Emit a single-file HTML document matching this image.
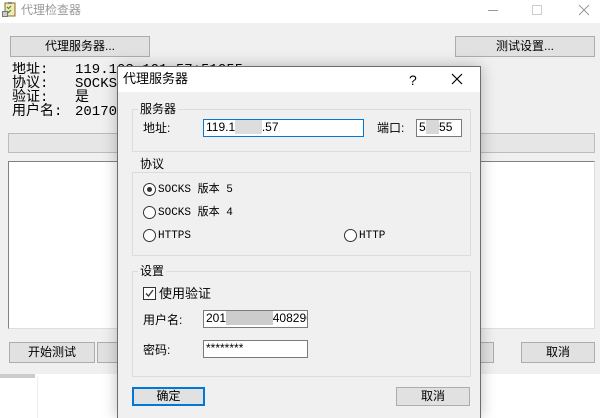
<!DOCTYPE html>
<html><head><meta charset="utf-8"><style>
*{margin:0;padding:0;box-sizing:border-box}
html,body{width:600px;height:418px;overflow:hidden}
body{background:#fff;position:relative;font-family:"Liberation Sans","Noto Sans CJK SC",sans-serif;font-size:12px;color:#000}
.a{position:absolute}
.btn{position:absolute;background:#e1e1e1;border:1px solid #adadad;text-align:center;font-size:12px;line-height:18px}
.t{position:absolute;white-space:nowrap;line-height:14px}
.inp{position:absolute;background:#fff;border:1px solid #7a7a7a;font-size:12px;line-height:15px;padding-left:2px;overflow:hidden;white-space:nowrap}
.grp{position:absolute;border:1px solid #dcdcdc}
.gl{position:absolute;background:#f0f0f0;padding:0 2px;font-size:12px;line-height:14px}
.rad{position:absolute;width:13px;height:13px;border:1px solid #333;border-radius:50%;background:#fff}
.mono{font-family:"Liberation Mono","Noto Sans CJK SC",monospace}
</style></head><body>
<div class="a" style="left:0;top:0;width:600px;height:23px;background:#fff"></div>
<svg class="a" style="left:2px;top:2px" width="14" height="16" viewBox="0 0 14 16"><rect x="3" y="1" width="10" height="13" fill="#f6e7b8" stroke="#8a6d2a"/><rect x="6" y="0" width="4" height="2" fill="#888"/><path d="M5 5l1.5 1.5L9 4M5 9l1.5 1.5L9 8" stroke="#2a9a2a" fill="none" stroke-width="1.2"/><rect x="0" y="9" width="6" height="6" fill="#777"/><rect x="1" y="10" width="4" height="4" fill="#ccc"/></svg>
<div class="t" style="left:21px;top:3px;font-size:12px;color:#999">代理检查器</div>
<div class="a" style="left:488px;top:10px;width:10px;height:1px;background:#999"></div>
<div class="a" style="left:532px;top:5px;width:10px;height:10px;border:1px solid #ccc"></div>
<svg class="a" style="left:578px;top:4px" width="12" height="12"><path d="M1 1L11 11M11 1L1 11" stroke="#999" stroke-width="1"/></svg>
<div class="a" style="left:0;top:23px;width:600px;height:351px;background:#f0f0f0"></div>
<div class="a" style="left:0;top:374px;width:35px;height:4px;background:#ccc"></div>
<div class="a" style="left:37px;top:376px;width:1px;height:42px;background:#eee"></div>
<div class="btn" style="left:10px;top:36px;width:140px;height:21px">代理服务器...</div>
<div class="btn" style="left:455px;top:36px;width:140px;height:21px">测试设置...</div>
<div class="a" style="left:10px;top:62px;width:240px;height:54px;overflow:hidden;font-size:14px">
<div class="t mono" style="left:2px;top:1px">地址:</div><div class="t mono" style="left:65px;top:1px">119.103.101.57:51055</div>
<div class="t mono" style="left:2px;top:15px">协议:</div><div class="t mono" style="left:65px;top:15px">SOCKS 5</div>
<div class="t mono" style="left:2px;top:29px">验证:</div><div class="t mono" style="left:65px;top:29px">是</div>
<div class="t mono" style="left:2px;top:43px">用户名:</div><div class="t mono" style="left:65px;top:43px">20170719</div>
</div>
<div class="a" style="left:8px;top:133px;width:587px;height:20px;background:#e6e6e6;border:1px solid #bcbcbc"></div>
<div class="a" style="left:8px;top:161px;width:587px;height:168px;background:#fff;border:1px solid #828282;border-right-color:#ddd;border-bottom-color:#ddd"></div>
<div class="btn" style="left:9px;top:342px;width:86px;height:21px">开始测试</div>
<div class="btn" style="left:97px;top:342px;width:60px;height:21px"></div>
<div class="btn" style="left:420px;top:342px;width:74px;height:21px"></div>
<div class="btn" style="left:521px;top:342px;width:74px;height:21px">取消</div>
<!-- dialog -->
<div class="a" style="left:117px;top:66px;width:364px;height:352px;box-shadow:0 0 14px rgba(0,0,0,0.25)"></div>
<div class="a" style="left:117px;top:66px;width:364px;height:352px;background:#f0f0f0;border:1px solid #6d6d6d;border-bottom:none"></div>
<div class="a" style="left:118px;top:67px;width:362px;height:25px;background:#fff"></div>
<div class="t" style="left:123px;top:72px;font-size:13px">代理服务器</div>
<div class="t" style="left:409px;top:73px;font-size:14px">?</div>
<svg class="a" style="left:451px;top:73px" width="12" height="12"><path d="M1 1L11 11M11 1L1 11" stroke="#000" stroke-width="1.2"/></svg>
<div class="grp" style="left:132px;top:109px;width:339px;height:43px"></div>
<div class="gl" style="left:138px;top:102px">服务器</div>
<div class="t" style="left:143px;top:121px">地址:</div>
<div class="inp" style="left:203px;top:119px;width:161px;height:18px;border-color:#0078d7">119.1<span style="color:#ddd;background:#ddd">0000</span>.57</div>
<div class="t" style="left:377px;top:121px">端口:</div>
<div class="inp" style="left:416px;top:119px;width:46px;height:18px">5<span style="color:#d8d8d8;background:#d8d8d8">10</span>55</div>
<div class="grp" style="left:132px;top:172px;width:339px;height:84px"></div>
<div class="gl" style="left:138px;top:157px">协议</div>
<div class="rad" style="left:143px;top:183px"><div class="a" style="left:3px;top:3px;width:5px;height:5px;border-radius:50%;background:#333"></div></div>
<div class="t mono" style="left:158px;top:183px;font-size:11px">SOCKS 版本 5</div>
<div class="rad" style="left:143px;top:206px"></div>
<div class="t mono" style="left:158px;top:206px;font-size:11px">SOCKS 版本 4</div>
<div class="rad" style="left:143px;top:229px"></div>
<div class="t mono" style="left:158px;top:229px;font-size:11px">HTTPS</div>
<div class="rad" style="left:344px;top:229px"></div>
<div class="t mono" style="left:359px;top:229px;font-size:11px">HTTP</div>
<div class="grp" style="left:132px;top:271px;width:339px;height:106px"></div>
<div class="gl" style="left:138px;top:264px">设置</div>
<div class="a" style="left:143px;top:287px;width:13px;height:13px;border:1px solid #333;background:#fff"></div>
<svg class="a" style="left:143px;top:287px" width="13" height="13"><path d="M3 6.5L5.5 9L10 3" stroke="#333" stroke-width="1.3" fill="none"/></svg>
<div class="t" style="left:159px;top:287px;font-size:13px">使用验证</div>
<div class="t" style="left:143px;top:313px">用户名:</div>
<div class="inp" style="left:203px;top:310px;width:105px;height:18px">201<span style="color:#ccc;background:#ccc">7071900</span>408296</div>
<div class="t" style="left:143px;top:343px">密码:</div>
<div class="inp" style="left:203px;top:340px;width:105px;height:18px">********</div>
<div class="btn" style="left:132px;top:387px;width:73px;height:19px;border:2px solid #0078d7;line-height:15px">确定</div>
<div class="btn" style="left:396px;top:387px;width:74px;height:19px;line-height:17px">取消</div>
</body></html>
